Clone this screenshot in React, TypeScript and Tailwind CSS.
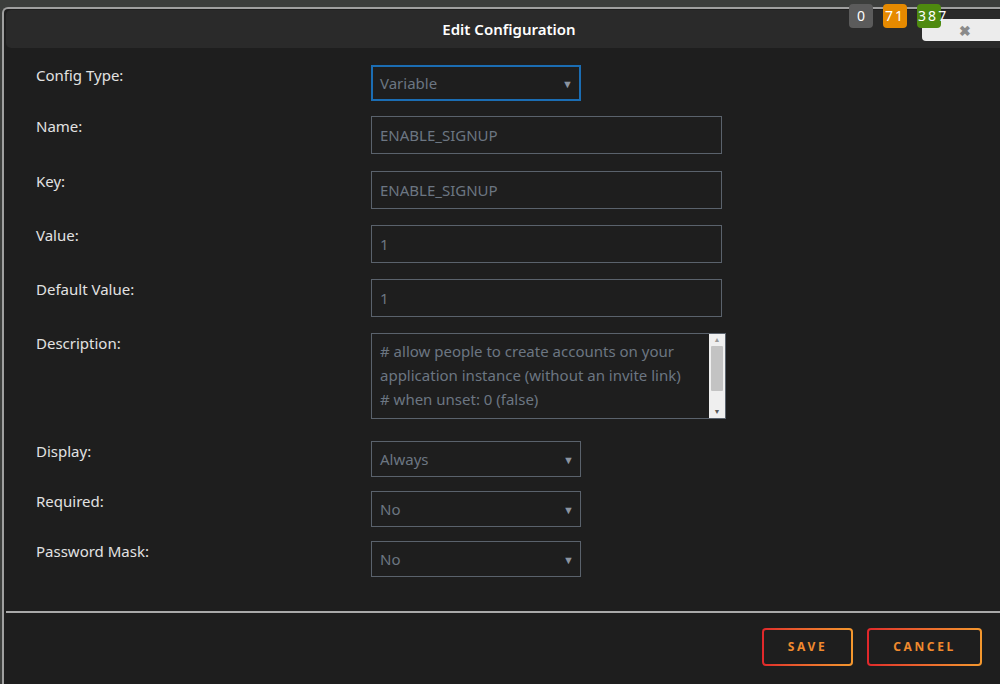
const font = { fontFamily: '"Noto Sans", "Open Sans", sans-serif' };

type Row = {
    label: string;
    kind: "select" | "input" | "area";
    value: string;
    focus?: boolean;
    mb: string;
};

const rows: Row[] = [
    { label: "Config Type:", kind: "select", value: "Variable", focus: true, mb: "mb-[15px]" },
    { label: "Name:", kind: "input", value: "ENABLE_SIGNUP", mb: "mb-[17px]" },
    { label: "Key:", kind: "input", value: "ENABLE_SIGNUP", mb: "mb-[16px]" },
    { label: "Value:", kind: "input", value: "1", mb: "mb-[16px]" },
    { label: "Default Value:", kind: "input", value: "1", mb: "mb-[16px]" },
    { label: "Description:", kind: "area", value: "", mb: "mb-[22px]" },
    { label: "Display:", kind: "select", value: "Always", mb: "mb-[14px]" },
    { label: "Required:", kind: "select", value: "No", mb: "mb-[14px]" },
    { label: "Password Mask:", kind: "select", value: "No", mb: "mb-0" },
];

function Field({ row }: { row: Row }) {
    if (row.kind === "select") {
        return (
            <div
                className={
                    "w-[210px] h-[36px] flex items-center justify-between pr-[6px] text-[15px] text-[#6c7682] " +
                    (row.focus ? "border-2 border-[#1b6db3] pl-[7px]" : "border border-[#5a626c] pl-[8px]")
                }
            >
                <span>{row.value}</span>
                <span className="text-[11px] text-[#8b94a0] leading-none">▼</span>
            </div>
        );
    }
    if (row.kind === "input") {
        return (
            <div className="w-[351px] h-[38px] flex items-center pl-[8px] border border-[#5a626c] text-[15px] text-[#6c7682]">
                {row.value}
            </div>
        );
    }
    return (
        <div className="w-[355px] h-[86px] border border-[#5a626c] flex">
            <div className="flex-1 pl-[8px] pt-[5px] text-[15px] leading-[24px] text-[#6c7682] overflow-hidden whitespace-nowrap">
                <div># allow people to create accounts on your</div>
                <div>application instance (without an invite link)</div>
                <div># when unset: 0 (false)</div>
            </div>
            <div className="w-[16px] bg-[#efefef] flex flex-col items-center">
                <span className="text-[7px] text-[#9a9a9a] leading-[12px]">▲</span>
                <div className="w-[12px] h-[45px] bg-[#c3c3c3] rounded-[1px]" />
                <div className="flex-1" />
                <span className="text-[7px] text-[#5a5a5a] leading-[12px]">▼</span>
            </div>
        </div>
    );
}

export default function App() {
    return (
        <div className="w-[1000px] h-[684px] bg-[#3c3e3c] relative overflow-hidden" style={font}>
            <div className="mt-[7px] ml-[2px] h-[677px] border-l-2 border-t-2 border-[#a0a0a0] rounded-tl-[6px] bg-[#1e1e1e] flex flex-col">
                <div className="mt-[1px] ml-[2px] h-[38px] bg-[#2a2a2a] rounded-l-[5px] flex items-center justify-center">
                    <span className="text-[15px] font-semibold text-white pl-[12px]">Edit Configuration</span>
                </div>

                <div className="pt-[17px] pl-[32px] flex flex-col">
                    {rows.map((r) => (
                        <div key={r.label} className={"flex items-start " + r.mb}>
                            <div className="w-[335px] text-[15px] leading-[20px] text-[#e2e2e2]">{r.label}</div>
                            <Field row={r} />
                        </div>
                    ))}
                </div>

                <div className="mt-[34px] ml-[2px] h-[2px] bg-[#a9a9a9]" />

                <div className="flex justify-end gap-[14px] pt-[15px] pr-[18px]">
                    {["SAVE", "CANCEL"].map((t) => (
                        <div
                            key={t}
                            className="p-[2px] rounded-[4px] bg-gradient-to-r from-[#e0262b] to-[#f4982e]"
                        >
                            <div
                                className={
                                    "h-[34px] rounded-[2px] bg-[#1e1e1e] flex items-center justify-center text-[12px] font-bold tracking-[0.22em] text-[#f08a2e] " +
                                    (t === "SAVE" ? "w-[87px]" : "w-[111px]")
                                }
                            >
                                {t}
                            </div>
                        </div>
                    ))}
                </div>
            </div>

            {/* close button under badges */}
            <div className="absolute left-[922px] top-[19px] w-[90px] h-[22px] bg-[#ececec] rounded-[4px] flex items-center pl-[37px] text-[#8a8a8a] text-[14px] font-bold">
                ✖
            </div>

            <div className="absolute left-[849px] top-[4px] flex gap-[10px] text-[14px] text-white leading-none">
                <div className="w-[24px] h-[24px] rounded-[4px] bg-[#5b5b5b] flex justify-center pt-[5px]">0</div>
                <div className="w-[24px] h-[24px] rounded-[4px] bg-[#e68a00] flex justify-center pt-[5px] tracking-[0.15em]">71</div>
                <div className="w-[24px] h-[24px] rounded-[4px] bg-[#4e8a0f] pt-[5px] pl-[1px] tracking-[0.15em] whitespace-nowrap">387</div>
            </div>
        </div>
    );
}
